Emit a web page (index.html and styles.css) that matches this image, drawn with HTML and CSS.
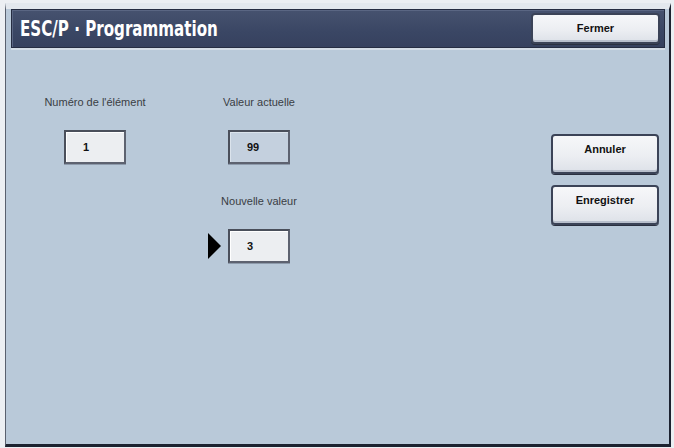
FILE: index.html
```html
<!DOCTYPE html>
<html lang="fr">
<head>
<meta charset="utf-8">
<title>ESC/P - Programmation</title>
<link rel="stylesheet" href="styles.css">
</head>
<body>
<div class="screen">
  <div class="header">
    <h1 class="title">ESC/P · Programmation</h1>
    <button class="btn btn-close">Fermer</button>
  </div>
  <div class="content">
    <div class="col col-1">
      <div class="label">Numéro de l'élément</div>
      <div class="box">1</div>
    </div>
    <div class="col col-2">
      <div class="label">Valeur actuelle</div>
      <div class="box box-readonly">99</div>
      <div class="label label-new">Nouvelle valeur</div>
      <div class="box box-active"><span class="pointer"></span>3</div>
    </div>
    <div class="actions">
      <button class="btn btn-side">Annuler</button>
      <button class="btn btn-side">Enregistrer</button>
    </div>
  </div>
</div>
</body>
</html>
```

FILE: styles.css
```css
html, body {
  margin: 0;
  padding: 0;
}
body {
  width: 674px;
  height: 448px;
  overflow: hidden;
  background: #eceff3;
  font-family: "Liberation Sans", Arial, sans-serif;
}
.screen {
  box-sizing: border-box;
  margin: 3px 0 0 5px;
  width: 666px;
  height: 444px;
  border-left: 1px solid #59606e;
  border-right: 2px solid #1c2230;
  border-bottom: 3px solid #1c2230;
  border-top: 6px solid #e3e8ee;
  background: #b9c9d9;
  padding: 0 4px 0 5px;
  display: flex;
  flex-direction: column;
}
.header {
  box-sizing: border-box;
  height: 39px;
  background: linear-gradient(#46526f, #3a4664 60%, #36415e);
  border: 1px solid #262d42;
  box-shadow: inset 1px 1px 0 #5a6683, 0 2px 0 #d4dde6;
  display: flex;
  align-items: center;
  justify-content: space-between;
  padding: 0 4px 1px 8px;
}
.title {
  margin: 0;
  color: #ffffff;
  font-family: "DejaVu Sans Condensed", "Liberation Sans", sans-serif;
  font-stretch: condensed;
  font-weight: bold;
  font-size: 21px;
  line-height: 22px;
  transform: scaleX(0.8);
  transform-origin: left center;
  white-space: nowrap;
  padding-top: 2px;
}
.btn {
  box-sizing: border-box;
  font-family: "Liberation Sans", Arial, sans-serif;
  font-weight: bold;
  font-size: 11px;
  color: #111;
  background: linear-gradient(#f6f7f9, #eceef2 55%, #dde1e8);
  border: 2px solid #3b4357;
  border-radius: 4px;
  box-shadow: inset 0 -2px 0 #b8bfcc, 0 1px 0 #2a3040;
  padding: 0;
  cursor: pointer;
}
.btn-close {
  width: 129px;
  height: 31px;
  line-height: 25px;
}
.content {
  flex: 1;
  display: flex;
  align-items: flex-start;
  padding-top: 48px;
}
.col {
  width: 120px;
  display: flex;
  flex-direction: column;
  align-items: center;
}
.col-1 {
  margin-left: 24px;
}
.col-2 {
  margin-left: 44px;
}
.label {
  font-size: 11px;
  line-height: 13px;
  color: #3a3d44;
  white-space: nowrap;
}
.label-new {
  margin-top: 31px;
}
.box {
  position: relative;
  box-sizing: border-box;
  width: 62px;
  height: 34px;
  margin-top: 21px;
  border: 2px solid #4a4f5b;
  border-right-color: #5d6270;
  border-bottom-color: #5d6270;
  background: #eceef1;
  box-shadow: inset 1px 1px 0 #ffffff, 0 1px 0 #8d9aab;
  padding-left: 17px;
  font-size: 11px;
  font-weight: bold;
  line-height: 30px;
  color: #111;
}
.label-new + .box {
  margin-top: 21px;
}
.box-readonly {
  background: #c4d0de;
  box-shadow: inset 1px 1px 0 #dbe3ec, 0 1px 0 #8d9aab;
}
.pointer {
  position: absolute;
  left: -22px;
  top: 2px;
  width: 0;
  height: 0;
  border-top: 13px solid transparent;
  border-bottom: 13px solid transparent;
  border-left: 13px solid #000;
}
.actions {
  margin-left: auto;
  margin-right: 6px;
  margin-top: 38px;
  display: flex;
  flex-direction: column;
  gap: 11px;
}
.btn-side {
  width: 108px;
  height: 40px;
  line-height: 14px;
  padding-top: 6px;
  display: flex;
  justify-content: center;
  align-items: flex-start;
}
```
